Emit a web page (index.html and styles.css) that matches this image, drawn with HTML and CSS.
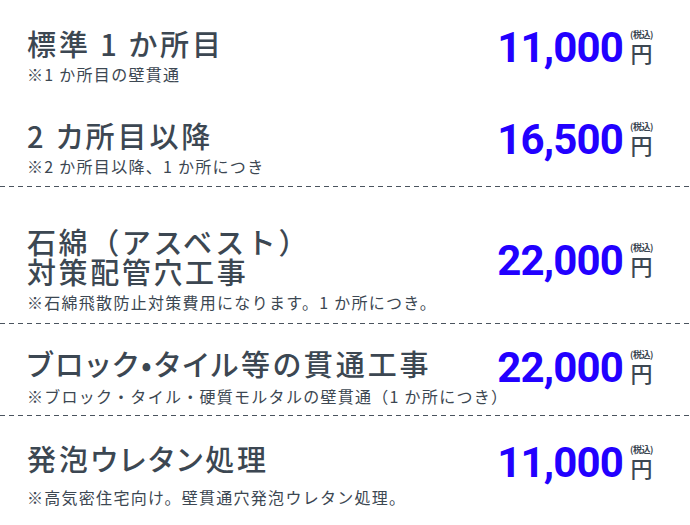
FILE: index.html
```html
<!DOCTYPE html>
<html lang="ja">
<head>
<meta charset="utf-8">
<link rel="stylesheet" href="styles.css">
</head>
<body>
<main class="list">
  <section class="item item-1">
    <div class="head">
      <h2 class="title">標準 1 か所目</h2>
      <div class="price"><span class="num">11,000</span><span class="unit"><small>(税込)</small><span class="yen">円</span></span></div>
    </div>
    <p class="note">※1 か所目の壁貫通</p>
  </section>
  <section class="item item-2">
    <div class="head">
      <h2 class="title">2 カ所目以降</h2>
      <div class="price"><span class="num">16,500</span><span class="unit"><small>(税込)</small><span class="yen">円</span></span></div>
    </div>
    <p class="note">※2 か所目以降、1 か所につき</p>
  </section>
  <section class="item item-3">
    <div class="head">
      <h2 class="title title-mono">石綿（アスベスト）<br>対策配管穴工事</h2>
      <div class="price"><span class="num">22,000</span><span class="unit"><small>(税込)</small><span class="yen">円</span></span></div>
    </div>
    <p class="note">※石綿飛散防止対策費用になります。1 か所につき。</p>
  </section>
  <section class="item item-4">
    <div class="head">
      <h2 class="title">ブロック•タイル等の貫通工事</h2>
      <div class="price"><span class="num">22,000</span><span class="unit"><small>(税込)</small><span class="yen">円</span></span></div>
    </div>
    <p class="note">※ブロック・タイル・硬質モルタルの壁貫通（1 か所につき）</p>
  </section>
  <section class="item item-5">
    <div class="head">
      <h2 class="title">発泡ウレタン処理</h2>
      <div class="price"><span class="num">11,000</span><span class="unit"><small>(税込)</small><span class="yen">円</span></span></div>
    </div>
    <p class="note">※高気密住宅向け。壁貫通穴発泡ウレタン処理。</p>
  </section>
</main>
</body>
</html>
```
FILE: styles.css
```css
* { box-sizing: border-box; }
html, body { margin: 0; padding: 0; background: #ffffff; }
body {
  width: 690px;
  font-family: "Noto Sans CJK JP", "Noto Sans", sans-serif;
  color: #3c4752;
}
.list { display: flex; flex-direction: column; }
.item {
  padding: 0 37px 0 27px;
}
.item-3, .item-4, .item-5 {
  border-top: 1px solid transparent;
  background-image: repeating-linear-gradient(to right, #4a545e 0 5px, transparent 5px 9px);
  background-size: 100% 1px;
  background-repeat: no-repeat;
  background-position: 0 0;
  background-origin: border-box;
}
.item-1 { padding-top: 28px; }
.item-2 { padding-top: 36px; padding-bottom: 10px; }
.item-3 { padding-top: 39px; padding-bottom: 11px; }
.item-4 { padding-top: 24px; padding-bottom: 9px; }
.item-5 { padding-top: 27px; }
.head {
  display: flex;
  align-items: center;
  justify-content: space-between;
}
.title {
  margin: 0;
  font-size: 29px;
  line-height: 30px;
  font-weight: 500;
  letter-spacing: 0.1em;
  font-feature-settings: "palt";
}
.title-mono {
  font-feature-settings: normal;
  letter-spacing: 0.09em;
}
.price {
  display: flex;
  align-items: flex-end;
  gap: 7px;
  margin: 2px 0 -5px;
}
.num {
  font-family: Roboto, "Noto Sans", sans-serif;
  font-weight: 700;
  font-size: 42px;
  line-height: 30px;
  color: #2200ff;
  letter-spacing: -0.02em;
}
.unit {
  display: flex;
  flex-direction: column;
  align-items: center;
  color: #3c4752;
}
.unit small {
  font-size: 9px;
  line-height: 10px;
  font-weight: 700;
  letter-spacing: -0.05em;
  margin-bottom: 1px;
}
.yen {
  font-size: 22px;
  line-height: 22px;
  font-weight: 500;
}
.note {
  margin: 6px 0 0;
  font-size: 16px;
  line-height: 20px;
  letter-spacing: 0.08em;
}
.item-4 .note { margin-top: 8px; }
.item-5 .note { margin-top: 14px; }
```
